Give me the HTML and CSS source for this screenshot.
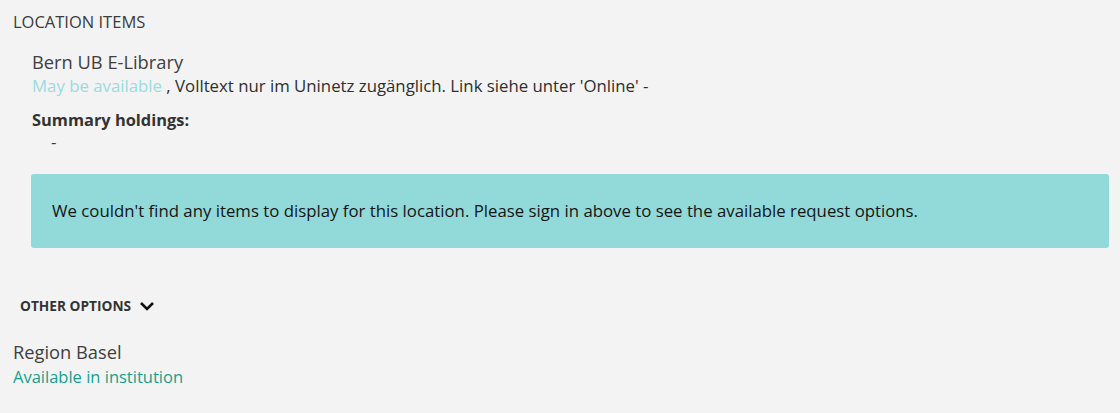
FILE: index.html
```html
<!DOCTYPE html>
<html>
<head>
<meta charset="utf-8">
<link rel="stylesheet" href="styles.css">
</head>
<body>
<div class="page">
  <h2 class="section-title">LOCATION ITEMS</h2>
  <div class="location">
    <div class="loc-name">Bern UB E-Library</div>
    <div class="loc-status"><span class="maybe">May be available</span> , Volltext nur im Uninetz zugänglich. Link siehe unter 'Online' -</div>
    <div class="holdings-label">Summary holdings:</div>
    <div class="holdings-value">-</div>
    <div class="notice">We couldn't find any items to display for this location. Please sign in above to see the available request options.</div>
  </div>
  <button class="other-options">OTHER OPTIONS
    <svg class="chev" width="16" height="11" viewBox="0 0 16 11"><path d="M2 2 L8 8 L14 2" fill="none" stroke="#111" stroke-width="2.6"/></svg>
  </button>
  <div class="region">
    <div class="region-name">Region Basel</div>
    <div class="region-status">Available in institution</div>
  </div>
</div>
</body>
</html>
```
FILE: styles.css
```css
html, body {
  margin: 0;
  padding: 0;
  background: #f3f3f3;
}
body {
  font-family: "Open Sans", "Liberation Sans", sans-serif;
  color: #3b3b3b;
}
.page {
  padding: 11px 11px 0 13px;
}
.section-title {
  margin: 0;
  font-size: 16.5px;
  font-weight: 400;
  line-height: 22px;
  color: #3b3b3b;
}
.location {
  padding: 16px 0 0 19px;
}
.loc-name {
  font-size: 18.3px;
  line-height: 25px;
  color: #404040;
}
.loc-status {
  font-size: 16.8px;
  line-height: 24px;
  color: #2e2e2e;
}
.maybe {
  color: #9adce1;
}
.holdings-label {
  margin-top: 10px;
  font-size: 16.4px;
  font-weight: 700;
  line-height: 24px;
  color: #333;
}
.holdings-value {
  padding-left: 19px;
  font-size: 16.8px;
  line-height: 20px;
}
.notice {
  margin: 22px 0 0 -1px;
  background: #92d9d9;
  border-radius: 3px;
  padding: 25px 21px 25px;
  font-size: 16.8px;
  line-height: 24px;
  color: #151515;
}
.other-options {
  display: flex;
  align-items: center;
  gap: 8px;
  height: 18px;
  margin: 49px 0 0 7px;
  padding: 0;
  border: 0;
  background: none;
  font-family: inherit;
  font-size: 13.7px;
  font-weight: 700;
  color: #333;
  line-height: 18px;
}
.region {
  padding-top: 25px;
}
.region-name {
  font-size: 18.3px;
  line-height: 24px;
  color: #404040;
}
.region-status {
  font-size: 16.5px;
  line-height: 26px;
  color: #16a08c;
}
```
